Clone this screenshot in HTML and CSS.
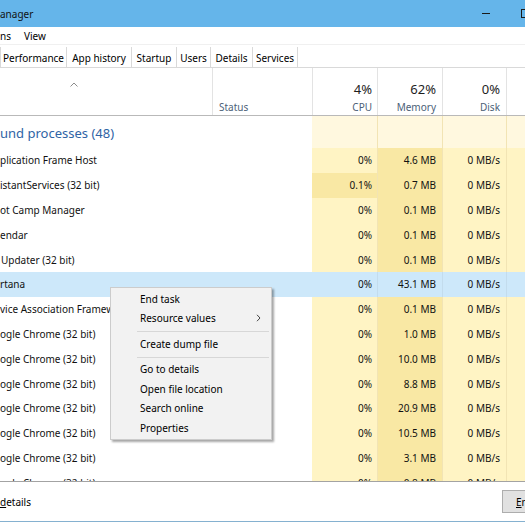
FILE: index.html
```html
<!DOCTYPE html>
<html lang="en">
<head>
<meta charset="utf-8">
<title>Task Manager</title>
<link rel="stylesheet" href="styles.css">
</head>
<body>
<div class="titlebar">
  <span class="title">anager</span>
  <div class="winctl">
    <span class="min"></span>
    <span class="max"></span>
  </div>
</div>
<div class="menubar">
  <span class="menu-item">ns</span>
  <span class="menu-item">View</span>
</div>
<div class="tabs">
  <span class="tab tab-first">Performance</span>
  <span class="tab">App history</span>
  <span class="tab">Startup</span>
  <span class="tab">Users</span>
  <span class="tab">Details</span>
  <span class="tab">Services</span>
</div>
<div class="table">
  <div class="row hdr">
    <div class="c c-name hdr-name">
      <svg class="sort" width="8" height="5" viewBox="0 0 8 5"><path d="M0.5 4.5 L4 1 L7.5 4.5" fill="none" stroke="#8c8c8c" stroke-width="1"/></svg>
    </div>
    <div class="c c-status hdr-cell hdr-left"><span class="lbl">Status</span></div>
    <div class="c c-cpu hdr-cell"><span class="pct">4%</span><span class="lbl">CPU</span></div>
    <div class="c c-mem hdr-cell"><span class="pct">62%</span><span class="lbl">Memory</span></div>
    <div class="c c-disk hdr-cell"><span class="pct">0%</span><span class="lbl">Disk</span></div>
    <div class="c c-net hdr-cell"></div>
  </div>
  <div class="row group">
    <div class="c c-name group-name">und processes (48)</div>
    <div class="c c-status"></div>
    <div class="c c-cpu"></div>
    <div class="c c-mem"></div>
    <div class="c c-disk"></div>
    <div class="c c-net"></div>
  </div>
  <div class="row data">
    <div class="c c-name">plication Frame Host</div>
    <div class="c c-status"></div>
    <div class="c c-cpu">0%</div>
    <div class="c c-mem">4.6 MB</div>
    <div class="c c-disk">0 MB/s</div>
    <div class="c c-net"></div>
  </div>
  <div class="row data">
    <div class="c c-name">istantServices (32 bit)</div>
    <div class="c c-status"></div>
    <div class="c c-cpu hot">0.1%</div>
    <div class="c c-mem">0.7 MB</div>
    <div class="c c-disk">0 MB/s</div>
    <div class="c c-net"></div>
  </div>
  <div class="row data">
    <div class="c c-name">ot Camp Manager</div>
    <div class="c c-status"></div>
    <div class="c c-cpu">0%</div>
    <div class="c c-mem">0.1 MB</div>
    <div class="c c-disk">0 MB/s</div>
    <div class="c c-net"></div>
  </div>
  <div class="row data">
    <div class="c c-name">endar</div>
    <div class="c c-status"></div>
    <div class="c c-cpu">0%</div>
    <div class="c c-mem">0.1 MB</div>
    <div class="c c-disk">0 MB/s</div>
    <div class="c c-net"></div>
  </div>
  <div class="row data">
    <div class="c c-name name-indent">Updater (32 bit)</div>
    <div class="c c-status"></div>
    <div class="c c-cpu">0%</div>
    <div class="c c-mem">0.1 MB</div>
    <div class="c c-disk">0 MB/s</div>
    <div class="c c-net"></div>
  </div>
  <div class="row data sel">
    <div class="c c-name">rtana</div>
    <div class="c c-status"></div>
    <div class="c c-cpu">0%</div>
    <div class="c c-mem">43.1 MB</div>
    <div class="c c-disk">0 MB/s</div>
    <div class="c c-net"></div>
  </div>
  <div class="row data">
    <div class="c c-name">vice Association Framew</div>
    <div class="c c-status"></div>
    <div class="c c-cpu">0%</div>
    <div class="c c-mem">0.1 MB</div>
    <div class="c c-disk">0 MB/s</div>
    <div class="c c-net"></div>
  </div>
  <div class="row data">
    <div class="c c-name">ogle Chrome (32 bit)</div>
    <div class="c c-status"></div>
    <div class="c c-cpu">0%</div>
    <div class="c c-mem">1.0 MB</div>
    <div class="c c-disk">0 MB/s</div>
    <div class="c c-net"></div>
  </div>
  <div class="row data">
    <div class="c c-name">ogle Chrome (32 bit)</div>
    <div class="c c-status"></div>
    <div class="c c-cpu">0%</div>
    <div class="c c-mem">10.0 MB</div>
    <div class="c c-disk">0 MB/s</div>
    <div class="c c-net"></div>
  </div>
  <div class="row data">
    <div class="c c-name">ogle Chrome (32 bit)</div>
    <div class="c c-status"></div>
    <div class="c c-cpu">0%</div>
    <div class="c c-mem">8.8 MB</div>
    <div class="c c-disk">0 MB/s</div>
    <div class="c c-net"></div>
  </div>
  <div class="row data">
    <div class="c c-name">ogle Chrome (32 bit)</div>
    <div class="c c-status"></div>
    <div class="c c-cpu">0%</div>
    <div class="c c-mem">20.9 MB</div>
    <div class="c c-disk">0 MB/s</div>
    <div class="c c-net"></div>
  </div>
  <div class="row data">
    <div class="c c-name">ogle Chrome (32 bit)</div>
    <div class="c c-status"></div>
    <div class="c c-cpu">0%</div>
    <div class="c c-mem">10.5 MB</div>
    <div class="c c-disk">0 MB/s</div>
    <div class="c c-net"></div>
  </div>
  <div class="row data">
    <div class="c c-name">ogle Chrome (32 bit)</div>
    <div class="c c-status"></div>
    <div class="c c-cpu">0%</div>
    <div class="c c-mem">3.1 MB</div>
    <div class="c c-disk">0 MB/s</div>
    <div class="c c-net"></div>
  </div>
  <div class="row data">
    <div class="c c-name">ogle Chrome (32 bit)</div>
    <div class="c c-status"></div>
    <div class="c c-cpu">0%</div>
    <div class="c c-mem">0.8 MB</div>
    <div class="c c-disk">0 MB/s</div>
    <div class="c c-net"></div>
  </div>
</div>
<div class="footer">
  <span class="details"><u>d</u>etails</span>
  <span class="btn"><u>E</u>nd task</span>
</div>
<div class="frame-bottom"></div>

<div class="ctx">
  <div class="ctx-item">End task</div>
  <div class="ctx-item">Resource values
    <svg class="sub" width="5" height="8" viewBox="0 0 5 8"><path d="M1 0.8 L4 4 L1 7.2" fill="none" stroke="#444" stroke-width="1"/></svg>
  </div>
  <div class="ctx-sep"></div>
  <div class="ctx-item">Create dump file</div>
  <div class="ctx-sep"></div>
  <div class="ctx-item">Go to details</div>
  <div class="ctx-item">Open file location</div>
  <div class="ctx-item">Search online</div>
  <div class="ctx-item">Properties</div>
</div>
</body>
</html>
```

FILE: styles.css
```css
html, body {
  margin: 0;
  padding: 0;
}
body {
  width: 525px;
  height: 525px;
  overflow: hidden;
  position: relative;
  background: #ffffff;
  color: #000000;
  font-family: "Noto Sans", "Open Sans", sans-serif;
  font-size: 10px;
}

/* title bar */
.titlebar {
  height: 27px;
  background: #65b5ea;
  display: flex;
  align-items: center;
  overflow: hidden;
}
.title {
  padding-top: 1px;
  color: #111;
  font-size: 10px;
}
.winctl {
  margin-left: auto;
  width: 43px;
  flex-shrink: 0;
  display: flex;
  align-items: center;
  gap: 31px;
}
.min {
  flex-shrink: 0;
  width: 8px;
  height: 1px;
  background: #1a1a1a;
}
.max {
  flex-shrink: 0;
  width: 9px;
  height: 9px;
  box-sizing: border-box;
  border: 1px solid #1a1a1a;
}

/* menu bar */
.menubar {
  height: 18px;
  display: flex;
  align-items: center;
  gap: 13px;
  box-sizing: border-box;
  border-bottom: 1px solid #f0f0f0;
}

/* tabs */
.tabs {
  height: 21px;
  margin-top: 2px;
  box-sizing: border-box;
  border-bottom: 1px solid #d9d9d9;
  display: grid;
  grid-template-columns: 67px 65px 45px 34px 42px 45px;
}
.tab {
  box-sizing: border-box;
  border-right: 1px solid #d9d9d9;
  display: flex;
  align-items: center;
  justify-content: center;
  padding-top: 1px;
  white-space: nowrap;
}
.tab-first {
  border-left: 1px solid #d9d9d9;
}

/* table */
.table {
  height: 413px;
  overflow: hidden;
  box-sizing: border-box;
}
.row {
  display: grid;
  grid-template-columns: 212px 100px 65px 65px 64px 1fr;
}
.c {
  box-sizing: border-box;
  white-space: nowrap;
  overflow: hidden;
  display: flex;
  align-items: center;
  justify-content: flex-end;
  padding-right: 6px;
}
.c-cpu { padding-right: 5px; }
.c-name {
  justify-content: flex-start;
  padding-right: 0;
}
.name-indent { padding-left: 1px; }

/* header */
.hdr {
  height: 48px;
  box-sizing: border-box;
  border-bottom: 1px solid #b9b9b9;
}
.hdr-name {
  align-items: flex-start;
}
.sort {
  margin-left: 70px;
  margin-top: 14px;
}
.hdr-cell {
  border-left: 1px solid #e3e3e3;
  flex-direction: column;
  align-items: flex-end;
  justify-content: flex-end;
  padding-bottom: 1px;
}
.hdr-left {
  align-items: flex-start;
  padding-left: 6px;
}
.pct {
  font-size: 13px;
  line-height: 18px;
  color: #1e1e1e;
}
.lbl {
  line-height: 14px;
  margin-top: 2px;
  color: #4c5f78;
}

/* group row */
.group {
  height: 32px;
}
.group-name {
  font-size: 13px;
  color: #2f64a5;
  padding-top: 2px;
}
.group .c-cpu,
.group .c-mem,
.group .c-disk,
.group .c-net {
  background: #fff8df;
}

/* data rows */
.data {
  height: 24.8px;
}
.data .c-cpu,
.data .c-disk,
.data .c-net {
  background: #fff4c4;
}
.data .c-mem,
.data .hot {
  background: #f9e8a4;
}
.group .c-mem,
.group .c-disk,
.group .c-net,
.data .c-mem,
.data .c-disk,
.data .c-net {
  border-left: 1px solid #f2e4b4;
}
.data .c {
  color: #111;
}
.sel,
.sel .c-cpu,
.sel .c-mem,
.sel .c-disk,
.sel .c-net {
  background: #cde8fa;
}
.sel .c-mem,
.sel .c-disk,
.sel .c-net {
  border-left-color: #c3dced;
}

/* footer */
.footer {
  height: 40px;
  box-sizing: border-box;
  border-top: 1px solid #a3a3a3;
  display: grid;
  grid-template-columns: 502px 80px;
  align-items: center;
  overflow: hidden;
}
.details u,
.btn u {
  text-decoration-thickness: 1px;
  text-underline-offset: 1px;
}
.btn {
  height: 23px;
  box-sizing: border-box;
  background: #e1e1e1;
  border: 1px solid #adadad;
  display: flex;
  align-items: center;
  padding-left: 13px;
  white-space: nowrap;
}
.frame-bottom {
  height: 4px;
  box-sizing: border-box;
  border-top: 1px solid #85b1d0;
  background: #ffffff;
}

/* context menu */
.ctx {
  position: absolute;
  left: 110px;
  top: 287px;
  width: 162px;
  box-sizing: border-box;
  background: #f2f2f2;
  border: 1px solid #cccccc;
  box-shadow: 2px 2px 2px rgba(0, 0, 0, 0.35);
  padding: 1px 0;
}
.ctx-item {
  height: 19.5px;
  display: flex;
  align-items: center;
  padding-left: 29px;
  padding-right: 10px;
  white-space: nowrap;
}
.sub {
  margin-left: auto;
}
.ctx-sep {
  height: 1px;
  background: #d7d7d7;
  margin: 3px 2px 2px 26px;
}
```
